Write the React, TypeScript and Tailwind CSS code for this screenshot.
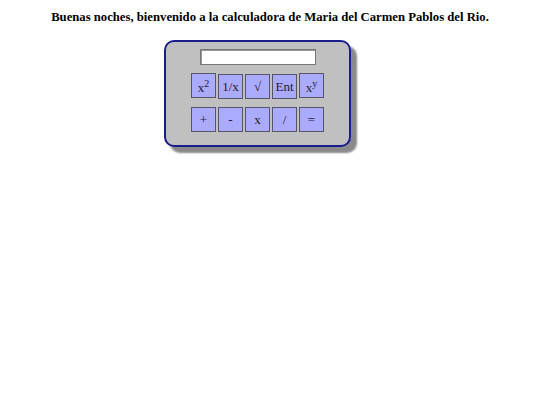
import React from "react";

const serif = { fontFamily: '"Liberation Serif", "Times New Roman", serif' };

function Btn({ children }: { children: React.ReactNode }) {
  return (
    <div className="w-[25px] h-[25px] flex items-center justify-center bg-[#aaaaff] border border-[#555566] text-[13px] text-[#222] leading-none">
      {children}
    </div>
  );
}

export default function App() {
  return (
    <div className="w-[540px] h-[405px] bg-white" style={serif}>
      <div className="pt-[9px] text-center text-[12.7px] font-bold text-black leading-[16px]">
        Buenas noches, bienvenido a la calculadora de Maria del Carmen Pablos del Rio.
      </div>
      <div className="ml-[164px] mt-[15px] w-[187px] h-[107px] bg-[#c0c0c0] border-2 border-[#1c1c8c] rounded-[10px] shadow-[6px_6px_2px_#8a8a8a] flex flex-col items-center pt-[7px]">
        <div className="w-[116px] h-[16px] bg-white border border-[#777] shadow-[inset_1px_1px_0_#999]" />
        <div className="flex gap-[2px] mt-[9px] items-end">
          <div className="-translate-y-[1px]"><Btn><span className="pt-[3px]">x<sup className="text-[10px]">2</sup></span></Btn></div>
          <Btn>1/x</Btn>
          <Btn>√</Btn>
          <Btn>Ent</Btn>
          <div className="-translate-y-[1px]"><Btn><span className="pt-[3px]">x<sup className="text-[10px]">y</sup></span></Btn></div>
        </div>
        <div className="flex gap-[2px] mt-[8px]">
          <Btn>+</Btn>
          <Btn>-</Btn>
          <Btn>x</Btn>
          <Btn>/</Btn>
          <Btn>=</Btn>
        </div>
      </div>
    </div>
  );
}
